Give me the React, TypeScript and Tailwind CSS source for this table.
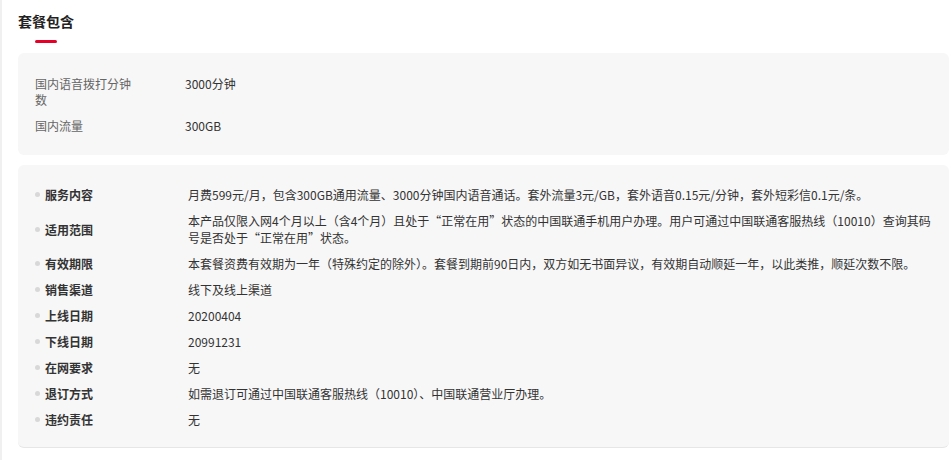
import { Fragment } from 'react';

const basics = [
  { label: '国内语音拨打分钟数', value: '3000分钟' },
  { label: '国内流量', value: '300GB' },
];

const details = [
  {
    label: '服务内容',
    value:
      '月费599元/月，包含300GB通用流量、3000分钟国内语音通话。套外流量3元/GB，套外语音0.15元/分钟，套外短彩信0.1元/条。',
  },
  {
    label: '适用范围',
    value:
      '本产品仅限入网4个月以上（含4个月）且处于“正常在用”状态的中国联通手机用户办理。用户可通过中国联通客服热线（10010）查询其码号是否处于“正常在用”状态。',
  },
  {
    label: '有效期限',
    value:
      '本套餐资费有效期为一年（特殊约定的除外）。套餐到期前90日内，双方如无书面异议，有效期自动顺延一年，以此类推，顺延次数不限。',
  },
  { label: '销售渠道', value: '线下及线上渠道' },
  { label: '上线日期', value: '20200404' },
  { label: '下线日期', value: '20991231' },
  { label: '在网要求', value: '无' },
  { label: '退订方式', value: '如需退订可通过中国联通客服热线（10010）、中国联通营业厅办理。' },
  { label: '违约责任', value: '无' },
];

export default function App() {
  return (
    <div
      className="min-h-[460px] border-l-2 border-[#f0f0f0] bg-white pr-[2px] pl-4 text-xs text-[#333]"
      style={{ fontFamily: '"Noto Sans CJK SC", "Liberation Sans", sans-serif' }}
    >
      {/* 标题 */}
      <div className="flex flex-col items-start pt-[11px]">
        <h2 className="text-sm leading-5 font-bold text-[#222]">套餐包含</h2>
        <div className="mt-[9px] ml-[17px] h-[3px] w-[22px] rounded-full bg-[#e60027]" />
      </div>

      <div className="mt-[10px] rounded-md bg-[#f7f7f7] pt-[23px] pr-4 pb-[21px] pl-[17px]">
        <div className="grid grid-cols-[150px_1fr] gap-y-[10px] leading-4">
          {basics.map((item) => (
            <Fragment key={item.label}>
              <div className="w-[100px] text-[#666]">{item.label}</div>
              <div className="text-[#333]">{item.value}</div>
            </Fragment>
          ))}
        </div>
      </div>

      <div className="mt-[10px] rounded-md border-b border-[#e6e6e6] bg-[#f7f7f7] pt-[21px] pr-4 pb-[19px] pl-[17px]">
        <ul className="flex flex-col gap-[9px] leading-[17px]">
          {details.map((item) => (
            <li key={item.label} className="flex items-center">
              <span className="mr-[5px] size-[5px] shrink-0 rounded-full bg-[#d8d8d8]" />
              <span className="w-[143px] shrink-0 font-bold text-[#333]">{item.label}</span>
              <span className="text-[#333]">{item.value}</span>
            </li>
          ))}
        </ul>
      </div>
    </div>
  );
}
